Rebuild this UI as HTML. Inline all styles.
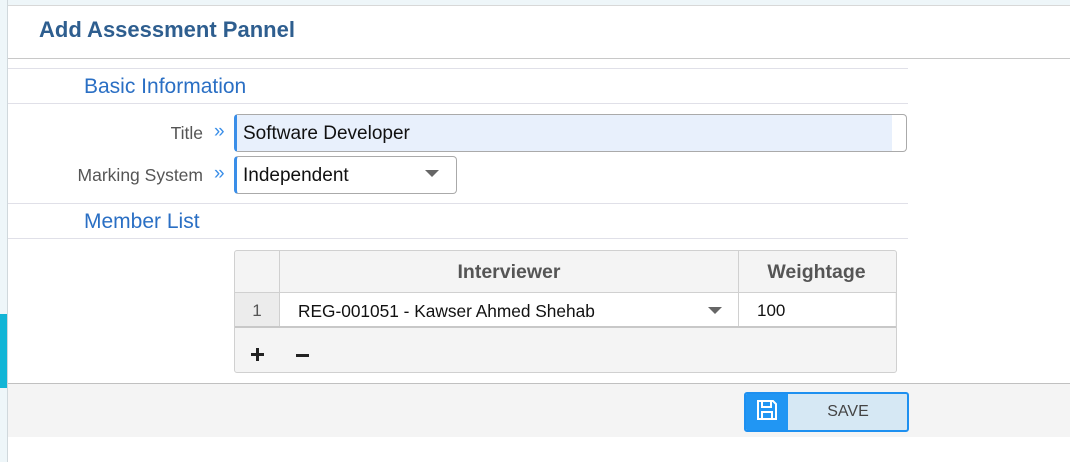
<!DOCTYPE html>
<html><head><style>
*{box-sizing:border-box;margin:0;padding:0}
body{width:1070px;height:462px;background:#fff;font-family:"Segoe UI","Liberation Sans",sans-serif;position:relative;overflow:hidden}
.a{position:absolute}
.lbl{color:#555;font-size:17.5px;text-align:right;width:195px;left:8px}
.chev{color:#3a8ee8;font-size:19px;left:214px}
.sec{color:#2a6fc4;font-size:21px;left:84px}
.hl{height:1px;background:#e0e0e8;left:8px;width:900px}
</style></head><body>
<div class="a" style="left:0;top:0;width:1070px;height:5px;background:#eef6f9"></div>
<div class="a" style="left:0;top:0;width:8px;height:462px;background:#eef6f9;border-right:1px solid #d0d8dc"></div>
<div class="a" style="left:0;top:314px;width:7px;height:74px;background:#12b5d6"></div>
<div class="a" style="left:8px;top:5px;width:1062px;height:1px;background:#d8d8d8"></div>
<div class="a" style="left:39px;top:17px;font-size:22px;font-weight:600;color:#2e5e8f">Add Assessment Pannel</div>
<div class="a" style="left:8px;top:58px;width:1062px;height:1px;background:#c8c8c8"></div>
<div class="hl a" style="top:68px"></div>
<div class="sec a" style="top:75px">Basic Information</div>
<div class="hl a" style="top:103px"></div>
<div class="lbl a" style="top:123px">Title</div>
<div class="chev a" style="top:121px">»</div>
<div class="a" style="left:234px;top:114px;width:673px;height:38px;border:1px solid #aaa;border-left:3px solid #3a8ee8;border-radius:4px;background:#fff"></div>
<div class="a" style="left:237px;top:115px;width:655px;height:36px;background:#e8f0fc"></div>
<div class="a" style="left:243px;top:123px;font-size:19px;color:#111">Software Developer</div>
<div class="lbl a" style="top:165px">Marking System</div>
<div class="chev a" style="top:163px">»</div>
<div class="a" style="left:234px;top:156px;width:223px;height:38px;border:1px solid #aaa;border-left:3px solid #3a8ee8;border-radius:4px"></div>
<div class="a" style="left:243px;top:165px;font-size:19px;color:#111">Independent</div>
<div class="a" style="left:425px;top:170px;border-left:7px solid transparent;border-right:7px solid transparent;border-top:7px solid #666"></div>
<div class="hl a" style="top:203px"></div>
<div class="sec a" style="top:210px">Member List</div>
<div class="hl a" style="top:238px"></div>
<div class="a" style="left:234px;top:250px;width:663px;height:123px;border:1px solid #d0d0d0;border-radius:3px;background:#f4f4f4"></div>
<div class="a" style="left:279px;top:251px;width:1px;height:76px;background:#d0d0d0"></div>
<div class="a" style="left:738px;top:251px;width:1px;height:76px;background:#d0d0d0"></div>
<div class="a" style="left:235px;top:292px;width:661px;height:1px;background:#d0d0d0"></div>
<div class="a" style="left:280px;top:293px;width:458px;height:34px;background:#fff"></div>
<div class="a" style="left:739px;top:293px;width:156px;height:34px;background:#fff"></div>
<div class="a" style="left:235px;top:293px;width:44px;height:34px;background:#ececec"></div>
<div class="a" style="left:235px;top:326px;width:661px;height:2px;background:#c8c8c8"></div>
<div class="a" style="left:280px;top:261px;width:458px;text-align:center;font-size:19.5px;font-weight:700;color:#555">Interviewer</div>
<div class="a" style="left:739px;top:261px;width:155px;text-align:center;font-size:19.5px;font-weight:700;color:#555">Weightage</div>
<div class="a" style="left:235px;top:301px;width:44px;text-align:center;font-size:17px;color:#555">1</div>
<div class="a" style="left:298px;top:301px;font-size:17.3px;color:#111">REG-001051 - Kawser Ahmed Shehab</div>
<div class="a" style="left:708px;top:307px;border-left:7px solid transparent;border-right:7px solid transparent;border-top:7px solid #666"></div>
<div class="a" style="left:757px;top:301px;font-size:17px;color:#111">100</div>
<div class="a" style="left:251px;top:353px;width:13px;height:3px;background:#222"></div>
<div class="a" style="left:256px;top:348px;width:3px;height:13px;background:#222"></div>
<div class="a" style="left:296px;top:354px;width:13px;height:3px;background:#222"></div>
<div class="a" style="left:8px;top:383px;width:1062px;height:54px;background:#f4f4f4;border-top:1px solid #c0c0c0"></div>
<div class="a" style="left:744px;top:392px;width:165px;height:40px;border:2px solid #1e90f0;border-radius:3px;background:#d6e8f4;overflow:hidden">
<div class="a" style="left:0;top:0;width:42px;height:36px;background:#2196f3"></div>
<svg class="a" style="left:10px;top:5px" width="22" height="22" viewBox="0 0 22 22"><path d="M2 2h15l3 3v15H2z M6 2v6h9V2 M6 20v-7h10v7" fill="none" stroke="#fff" stroke-width="2"/></svg>
<div class="a" style="left:42px;top:9px;width:120px;text-align:center;font-size:16px;color:#444">SAVE</div>
</div>
</body></html>
